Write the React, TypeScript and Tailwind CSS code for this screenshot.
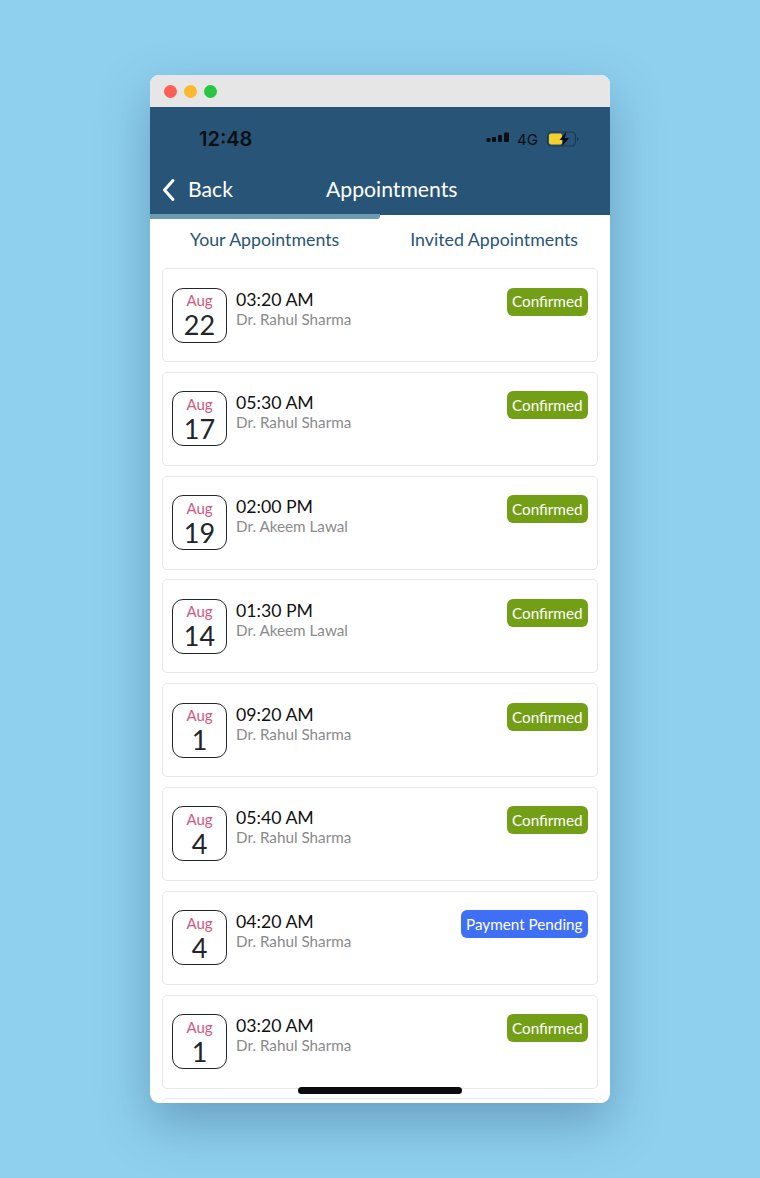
const Appointments = [
  { day: "22", time: "03:20 AM", doctor: "Dr. Rahul Sharma", status: "Confirmed" },
  { day: "17", time: "05:30 AM", doctor: "Dr. Rahul Sharma", status: "Confirmed" },
  { day: "19", time: "02:00 PM", doctor: "Dr. Akeem Lawal", status: "Confirmed" },
  { day: "14", time: "01:30 PM", doctor: "Dr. Akeem Lawal", status: "Confirmed" },
  { day: "1", time: "09:20 AM", doctor: "Dr. Rahul Sharma", status: "Confirmed" },
  { day: "4", time: "05:40 AM", doctor: "Dr. Rahul Sharma", status: "Confirmed" },
  { day: "4", time: "04:20 AM", doctor: "Dr. Rahul Sharma", status: "Payment Pending" },
  { day: "1", time: "03:20 AM", doctor: "Dr. Rahul Sharma", status: "Confirmed" },
];

function StatusIcons() {
  return (
    <div className="flex items-center">
      {/* signal bars */}
      <svg width="24" height="16" viewBox="0 0 24 16" fill="#0b0f14">
        <rect x="0.500" y="7" width="4" height="4" rx="1" />
        <rect x="6" y="6" width="4" height="5" rx="1" />
        <rect x="12" y="4" width="4" height="7" rx="1" />
        <rect x="18" y="1.500" width="5" height="9.500" rx="1" />
      </svg>
      <span className="ml-[7px] text-[15px] leading-none text-[#0b0f14] font-['Inter',sans-serif]">4G</span>
      {/* battery */}
      <svg className="ml-[8px]" width="33" height="18" viewBox="0 0 33 18" fill="none">
        <rect x="1.500" y="2" width="28" height="14" rx="4" stroke="#1b3a52" strokeWidth="1.200" />
        <rect x="3" y="3.500" width="13" height="11" rx="2" fill="#f5cf2c" />
        <path d="M31 7v4c1-.4 1.400-1 1.400-2S32 7.400 31 7z" fill="#1b3a52" />
        <path d="M20.500 1.500 13.500 10h4l-1.500 6.500L23 8h-4.200z" fill="#0b0f14" />
      </svg>
    </div>
  );
}

function AppointmentCard({ day, time, doctor, status }: (typeof Appointments)[number]) {
  const pending = status === "Payment Pending";
  return (
    <div className="mb-[9.800px] flex h-[94px] shrink-0 items-start rounded-[5px] border-[1.500px] border-[#e8e8e8] bg-white pl-[9px] pr-[9px] pt-[18.500px]">
      <div className="flex h-[55px] w-[55px] shrink-0 flex-col items-center rounded-[11px] border-[1.500px] border-[#22262a]">
        <span className="mt-[1.500px] text-[15px] leading-[20px] text-[#d0587f]">Aug</span>
        <span className="mt-[0px] text-[27px] leading-[30px] text-[#22262a]">{day}</span>
      </div>
      <div className="ml-[9px] flex flex-col pt-[1px]">
        <span className="text-[17.700px] leading-[22px] text-[#111111]">{time}</span>
        <span className="mt-[-1px] text-[15.250px] leading-[19px] text-[#8a8a8a]">{doctor}</span>
      </div>
      <span
        className={
          "ml-auto flex h-[28px] items-center rounded-[6px] px-[5.500px] pt-[1px] text-[15.250px] leading-none text-white " +
          (pending ? "bg-[#3f6ff5]" : "bg-[#739f17]")
        }
      >
        {status}
      </span>
    </div>
  );
}

export default function App() {
  return (
    <div className="flex h-[1178px] w-[760px] justify-center overflow-hidden bg-[#8fd0ef] pt-[75px] font-['Lato',sans-serif]">
      <div className="relative flex h-[1028px] w-[460px] flex-col overflow-hidden rounded-[9px] bg-white shadow-[0_20px_50px_rgba(30,70,100,0.35)]">
        {/* Window bar */}
        <div className="flex h-[32px] shrink-0 items-center gap-[7px] bg-[#e6e6e6] pl-[14px] pt-[1px]">
          <div className="h-[13px] w-[13px] rounded-full bg-[#fd5f57]"></div>
          <div className="h-[13px] w-[13px] rounded-full bg-[#fdb82e]"></div>
          <div className="h-[13px] w-[13px] rounded-full bg-[#27c83f]"></div>
        </div>

        {/* Header */}
        <div className="flex h-[108px] shrink-0 flex-col bg-[#285577]">
          <div className="flex h-[62px] items-center justify-between pt-[2px] pl-[49px] pr-[31px]">
            <span className="text-[20px] font-semibold leading-[30px] text-[#0b0f14] font-['Inter',sans-serif]">12:48</span>
            <StatusIcons />
          </div>
          <div className="relative flex h-[40px] items-center pl-[12px] pt-[1px]">
            <svg width="14" height="24" viewBox="0 0 14 24" fill="none">
              <path d="M11 2.500 2.500 12 11 21.500" stroke="white" strokeWidth="3" strokeLinecap="round" strokeLinejoin="round" />
            </svg>
            <span className="ml-[12px] w-[44px] text-[21.200px] leading-none text-white">Back</span>
            <span className="ml-[94px] text-[21.200px] leading-none text-white">Appointments</span>
          </div>
        </div>

        {/* Tabs */}
        <div className="relative flex h-[53px] shrink-0 items-center bg-white text-[17.750px] text-[#285577]">
          <div className="absolute left-0 top-[-1px] h-[5px] w-[230px] rounded-br-[3px] bg-[#6b9bb0]"></div>
          <span className="ml-[40px] mb-[4px]">Your Appointments</span>
          <span className="ml-[71px] mb-[4px]">Invited Appointments</span>
        </div>

        {/* List */}
        <div className="flex flex-1 flex-col overflow-hidden px-[12px]">
          {Appointments.map((item, i) => (
            <AppointmentCard key={i} {...item} />
          ))}
          <div className="h-[40px] shrink-0 rounded-[5px] border-[1.500px] border-[#e8e8e8] bg-white"></div>
        </div>

        {/* Home indicator */}
        <div className="absolute bottom-[9px] left-[148px] h-[7px] w-[164px] rounded-full bg-[#0b0b0d]"></div>
      </div>
    </div>
  );
}
